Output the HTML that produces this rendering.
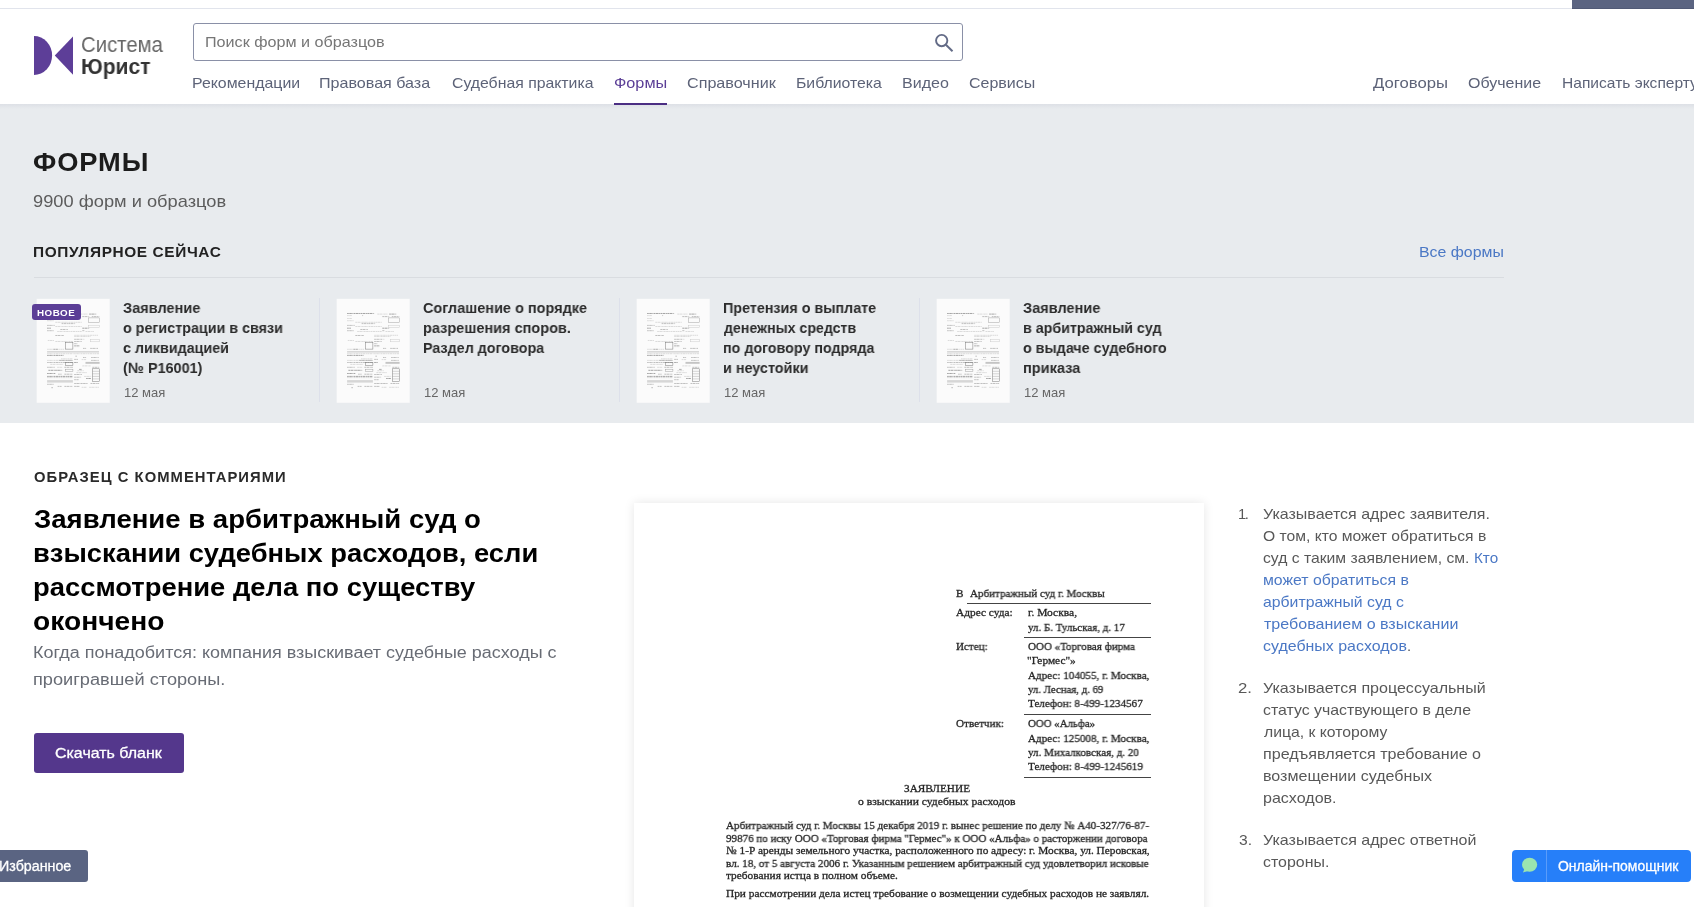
<!DOCTYPE html>
<html lang="ru">
<head>
<meta charset="utf-8">
<title>Формы — Система Юрист</title>
<style>
*{box-sizing:border-box;margin:0;padding:0}
html,body{width:1694px;height:907px;overflow:hidden;background:#fff}
body{position:relative;font-family:"Liberation Sans",sans-serif}
.page{position:absolute;left:0;top:0;width:1694px;height:907px;overflow:hidden;contain:paint}
.abs,.t,.th{position:absolute}
.t{white-space:nowrap;display:block;font-weight:400;font-style:normal;will-change:transform;transform-origin:0 0}
.r{font-family:"Liberation Serif",serif}
.th{background:#fbfbfb}
a{color:inherit;text-decoration:none}
ol,li{list-style:none}
</style>
</head>
<body>
<div class="page">
<!-- top strip -->
<div class="abs" style="left:0;top:0;width:1694px;height:8px;background:#fff"></div>
<div class="abs" style="left:0;top:8px;width:1694px;height:1px;background:#e1e4ec"></div>
<div class="abs" style="left:1572px;top:0;width:122px;height:9px;background:#5b6481;border-bottom:1px solid #515a76"></div>

<!-- gray section -->
<div class="abs" style="left:0;top:104px;width:1694px;height:319px;background:#e8ebee"></div>
<div class="abs" style="left:0;top:104px;width:1694px;height:5px;background:linear-gradient(#dde0e6,#e8ebee)"></div>

<!-- logo -->
<svg class="abs" style="left:34px;top:36px" width="40" height="40" viewBox="0 0 40 40">
<path d="M0 0A18.1 19.5 0 0 1 0 39Z" fill="#5d3e98"/>
<path d="M39 .6V38.7L20.8 19.5Z" fill="#5d3e98"/>
</svg>

<!-- search -->
<div class="abs" style="left:193px;top:23px;width:770px;height:38px;border:1px solid #8a90a7;border-radius:3px;background:#fff"></div>
<svg class="abs" style="left:932px;top:31px" width="24" height="24" viewBox="0 0 24 24" fill="none" stroke="#636b86" stroke-width="1.9">
<circle cx="9.7" cy="9.55" r="5.65"/><path d="M13.9 13.8L20.5 20.3" stroke-width="2"/>
</svg>

<!-- nav underline -->
<div class="abs" style="left:614px;top:103px;width:53px;height:2px;background:#4b2e83"></div>

<!-- divider in gray -->
<div class="abs" style="left:34px;top:277px;width:1470px;height:1px;background:#d9dce0"></div>

<!-- cards -->
<svg class="th" style="left:36px;top:298px;transform:translate(.7px,.8px)" width="73" height="104" viewBox="0 0 73 104" stroke-width=".6" stroke-dasharray="1.7 .45 2.6 .5 1.1 .4"><rect x="10.4" y="52.4" width="51.9" height="1.3" fill="#cfcfcf"/><rect x="48.8" y="63.1" width="14.1" height="1.9" fill="#c4c4c4"/><rect x="10.4" y="81.3" width="25.8" height="2.5" fill="#d6d6d6"/><path d="M10.4 14.7H37.5" stroke="#6a6a6a"/><path d="M40.6 15.3H50.7" stroke="#c6c6c6"/><path d="M52.5 15.3H59.5" stroke="#6a6a6a"/><path d="M10.4 16.8H15.5" stroke="#c6c6c6"/><path d="M25.5 16.8H26.4" stroke="#999"/><path d="M45.6 17.8H52.5" stroke="#999"/><path d="M55.1 17.8H62.6" stroke="#999"/><path d="M10.4 19.7H15.5" stroke="#c6c6c6"/><path d="M10.4 21.9H17.3" stroke="#c6c6c6"/><path d="M18.6 23.5H45.0" stroke="#c6c6c6"/><path d="M24.9 24.8H38.5" stroke="#999"/><path d="M10.4 26.6H18.0" stroke="#999"/><path d="M18.6 27.7H45.0" stroke="#c6c6c6"/><path d="M10.4 29.4H14.2" stroke="#6a6a6a"/><path d="M23.6 30.7H31.2" stroke="#999"/><path d="M45.6 29.4H52.5" stroke="#6a6a6a"/><path d="M10.4 31.9H17.3" stroke="#999"/><path d="M20.5 32.7H45.0" stroke="#c6c6c6"/><path d="M45.6 31.9H48.1" stroke="#999"/><path d="M48.8 32.7H57.6" stroke="#c6c6c6"/><path d="M18.6 36.7H27.4" stroke="#999"/><path d="M37.5 36.5H61.3" stroke="#c6c6c6"/><path d="M37.5 37.7H53.8" stroke="#c6c6c6"/><path d="M11.1 41.7H17.3" stroke="#c6c6c6"/><path d="M18.6 42.7H36.2" stroke="#c6c6c6"/><path d="M37.5 40.5H45.6" stroke="#999"/><path d="M46.9 40.5H47.5" stroke="#999"/><path d="M37.5 42.7H45.0" stroke="#999"/><path d="M37.5 44.9H40.6" stroke="#999"/><path d="M37.5 46.8H43.1" stroke="#999"/><path d="M37.5 47.8H43.1" stroke="#c6c6c6"/><path d="M10.4 50.5H27.4" stroke="#c6c6c6"/><path d="M16.7 50.5H21.1" stroke="#999"/><path d="M46.3 49.6H49.4" stroke="#999"/><path d="M53.5 49.6H61.3" stroke="#999"/><path d="M10.4 54.9H62.3" stroke="#c6c6c6"/><path d="M10.4 56.6H26.8" stroke="#6a6a6a"/><path d="M38.7 57.4H40.2" stroke="#999"/><path d="M46.3 58.7H49.4" stroke="#999"/><path d="M54.4 58.7H62.0" stroke="#999"/><path d="M24.3 60.0H35.6" stroke="#c6c6c6"/><path d="M10.4 61.6H36.2" stroke="#c6c6c6"/><path d="M22.6 61.6H36.2" stroke="#999"/><path d="M37.5 60.6H41.2" stroke="#999"/><path d="M45.0 60.8H49.4" stroke="#c6c6c6"/><path d="M54.4 61.6H62.0" stroke="#999"/><path d="M10.4 63.7H36.2" stroke="#999"/><path d="M37.5 63.7H41.0" stroke="#6a6a6a"/><path d="M13.6 65.6H26.4" stroke="#c6c6c6"/><path d="M45.6 67.1H53.8" stroke="#c6c6c6"/><path d="M10.4 68.5H18.0" stroke="#999"/><path d="M20.5 68.5H25.9" stroke="#c6c6c6"/><path d="M27.7 68.5H36.2" stroke="#999"/><path d="M55.7 68.5H62.6" stroke="#999"/><path d="M11.7 71.5H25.5" stroke="#6a6a6a"/><path d="M42.5 70.6H45.2" stroke="#6a6a6a"/><path d="M40.6 71.9H46.9" stroke="#c6c6c6"/><path d="M39.7 73.8H50.0" stroke="#c6c6c6"/><path d="M10.4 74.7H18.6" stroke="#6a6a6a"/><path d="M21.4 75.4H24.9" stroke="#999"/><path d="M27.7 75.4H35.6" stroke="#999"/><path d="M37.5 75.7H45.2" stroke="#999"/><path d="M10.4 77.6H36.2" stroke="#6a6a6a"/><path d="M47.5 77.6H54.4" stroke="#c6c6c6"/><path d="M10.4 78.8H36.2" stroke="#c6c6c6"/><path d="M37.5 78.4H44.4" stroke="#999"/><path d="M49.4 79.7H54.4" stroke="#6a6a6a"/><path d="M37.5 80.9H41.9" stroke="#999"/><path d="M37.5 84.7H51.3" stroke="#999"/><path d="M53.8 84.7H62.8" stroke="#999"/><path d="M10.4 85.5H17.3" stroke="#999"/><path d="M20.9 87.6H24.9" stroke="#999"/><path d="M27.7 87.6H35.6" stroke="#999"/><path d="M37.5 87.6H43.1" stroke="#999"/><path d="M45.0 88.5H50.0" stroke="#c6c6c6"/><path d="M52.5 88.5H62.3" stroke="#c6c6c6"/><path d="M14.6 88.9H16.3" stroke="#999"/><rect x="51.9" y="19.1" width="10.9" height="4.8" fill="none" stroke="#999" stroke-width=".45" stroke-dasharray="none"/><rect x="51.9" y="26.4" width="10.9" height="2.5" fill="none" stroke="#c6c6c6" stroke-width=".45" stroke-dasharray="none"/><rect x="53.8" y="40.5" width="9.0" height="2.5" fill="none" stroke="#c6c6c6" stroke-width=".45" stroke-dasharray="none"/><rect x="29.0" y="43.6" width="7.2" height="6.7" fill="none" stroke="#6a6a6a" stroke-width=".45" stroke-dasharray="none"/><rect x="29.0" y="63.7" width="7.2" height="3.1" fill="none" stroke="#6a6a6a" stroke-width=".45" stroke-dasharray="none"/><rect x="29.0" y="70.4" width="7.2" height="2.5" fill="none" stroke="#999" stroke-width=".45" stroke-dasharray="none"/><rect x="55.7" y="70.0" width="6.9" height="12.6" fill="none" stroke="#6a6a6a" stroke-width=".45" stroke-dasharray="none"/><path d="M55.7 72.5H62.6" stroke="#999" stroke-width=".4" stroke-dasharray="none"/><path d="M55.7 75.0H62.6" stroke="#999" stroke-width=".4" stroke-dasharray="none"/><path d="M55.7 77.6H62.6" stroke="#999" stroke-width=".4" stroke-dasharray="none"/><path d="M55.7 80.1H62.6" stroke="#999" stroke-width=".4" stroke-dasharray="none"/></svg>
<svg class="th" style="left:336px;top:298px;transform:translate(.7px,.8px)" width="73" height="104" viewBox="0 0 73 104" stroke-width=".6" stroke-dasharray="1.7 .45 2.6 .5 1.1 .4"><rect x="10.4" y="52.4" width="51.9" height="1.3" fill="#cfcfcf"/><rect x="48.8" y="63.1" width="14.1" height="1.9" fill="#c4c4c4"/><rect x="10.4" y="81.3" width="25.8" height="2.5" fill="#d6d6d6"/><path d="M10.4 14.7H37.5" stroke="#6a6a6a"/><path d="M40.6 15.3H50.7" stroke="#c6c6c6"/><path d="M52.5 15.3H59.5" stroke="#6a6a6a"/><path d="M10.4 16.8H15.5" stroke="#c6c6c6"/><path d="M25.5 16.8H26.4" stroke="#999"/><path d="M45.6 17.8H52.5" stroke="#999"/><path d="M55.1 17.8H62.6" stroke="#999"/><path d="M10.4 19.7H15.5" stroke="#c6c6c6"/><path d="M10.4 21.9H17.3" stroke="#c6c6c6"/><path d="M18.6 23.5H45.0" stroke="#c6c6c6"/><path d="M24.9 24.8H38.5" stroke="#999"/><path d="M10.4 26.6H18.0" stroke="#999"/><path d="M18.6 27.7H45.0" stroke="#c6c6c6"/><path d="M10.4 29.4H14.2" stroke="#6a6a6a"/><path d="M23.6 30.7H31.2" stroke="#999"/><path d="M45.6 29.4H52.5" stroke="#6a6a6a"/><path d="M10.4 31.9H17.3" stroke="#999"/><path d="M20.5 32.7H45.0" stroke="#c6c6c6"/><path d="M45.6 31.9H48.1" stroke="#999"/><path d="M48.8 32.7H57.6" stroke="#c6c6c6"/><path d="M18.6 36.7H27.4" stroke="#999"/><path d="M37.5 36.5H61.3" stroke="#c6c6c6"/><path d="M37.5 37.7H53.8" stroke="#c6c6c6"/><path d="M11.1 41.7H17.3" stroke="#c6c6c6"/><path d="M18.6 42.7H36.2" stroke="#c6c6c6"/><path d="M37.5 40.5H45.6" stroke="#999"/><path d="M46.9 40.5H47.5" stroke="#999"/><path d="M37.5 42.7H45.0" stroke="#999"/><path d="M37.5 44.9H40.6" stroke="#999"/><path d="M37.5 46.8H43.1" stroke="#999"/><path d="M37.5 47.8H43.1" stroke="#c6c6c6"/><path d="M10.4 50.5H27.4" stroke="#c6c6c6"/><path d="M16.7 50.5H21.1" stroke="#999"/><path d="M46.3 49.6H49.4" stroke="#999"/><path d="M53.5 49.6H61.3" stroke="#999"/><path d="M10.4 54.9H62.3" stroke="#c6c6c6"/><path d="M10.4 56.6H26.8" stroke="#6a6a6a"/><path d="M38.7 57.4H40.2" stroke="#999"/><path d="M46.3 58.7H49.4" stroke="#999"/><path d="M54.4 58.7H62.0" stroke="#999"/><path d="M24.3 60.0H35.6" stroke="#c6c6c6"/><path d="M10.4 61.6H36.2" stroke="#c6c6c6"/><path d="M22.6 61.6H36.2" stroke="#999"/><path d="M37.5 60.6H41.2" stroke="#999"/><path d="M45.0 60.8H49.4" stroke="#c6c6c6"/><path d="M54.4 61.6H62.0" stroke="#999"/><path d="M10.4 63.7H36.2" stroke="#999"/><path d="M37.5 63.7H41.0" stroke="#6a6a6a"/><path d="M13.6 65.6H26.4" stroke="#c6c6c6"/><path d="M45.6 67.1H53.8" stroke="#c6c6c6"/><path d="M10.4 68.5H18.0" stroke="#999"/><path d="M20.5 68.5H25.9" stroke="#c6c6c6"/><path d="M27.7 68.5H36.2" stroke="#999"/><path d="M55.7 68.5H62.6" stroke="#999"/><path d="M11.7 71.5H25.5" stroke="#6a6a6a"/><path d="M42.5 70.6H45.2" stroke="#6a6a6a"/><path d="M40.6 71.9H46.9" stroke="#c6c6c6"/><path d="M39.7 73.8H50.0" stroke="#c6c6c6"/><path d="M10.4 74.7H18.6" stroke="#6a6a6a"/><path d="M21.4 75.4H24.9" stroke="#999"/><path d="M27.7 75.4H35.6" stroke="#999"/><path d="M37.5 75.7H45.2" stroke="#999"/><path d="M10.4 77.6H36.2" stroke="#6a6a6a"/><path d="M47.5 77.6H54.4" stroke="#c6c6c6"/><path d="M10.4 78.8H36.2" stroke="#c6c6c6"/><path d="M37.5 78.4H44.4" stroke="#999"/><path d="M49.4 79.7H54.4" stroke="#6a6a6a"/><path d="M37.5 80.9H41.9" stroke="#999"/><path d="M37.5 84.7H51.3" stroke="#999"/><path d="M53.8 84.7H62.8" stroke="#999"/><path d="M10.4 85.5H17.3" stroke="#999"/><path d="M20.9 87.6H24.9" stroke="#999"/><path d="M27.7 87.6H35.6" stroke="#999"/><path d="M37.5 87.6H43.1" stroke="#999"/><path d="M45.0 88.5H50.0" stroke="#c6c6c6"/><path d="M52.5 88.5H62.3" stroke="#c6c6c6"/><path d="M14.6 88.9H16.3" stroke="#999"/><rect x="51.9" y="19.1" width="10.9" height="4.8" fill="none" stroke="#999" stroke-width=".45" stroke-dasharray="none"/><rect x="51.9" y="26.4" width="10.9" height="2.5" fill="none" stroke="#c6c6c6" stroke-width=".45" stroke-dasharray="none"/><rect x="53.8" y="40.5" width="9.0" height="2.5" fill="none" stroke="#c6c6c6" stroke-width=".45" stroke-dasharray="none"/><rect x="29.0" y="43.6" width="7.2" height="6.7" fill="none" stroke="#6a6a6a" stroke-width=".45" stroke-dasharray="none"/><rect x="29.0" y="63.7" width="7.2" height="3.1" fill="none" stroke="#6a6a6a" stroke-width=".45" stroke-dasharray="none"/><rect x="29.0" y="70.4" width="7.2" height="2.5" fill="none" stroke="#999" stroke-width=".45" stroke-dasharray="none"/><rect x="55.7" y="70.0" width="6.9" height="12.6" fill="none" stroke="#6a6a6a" stroke-width=".45" stroke-dasharray="none"/><path d="M55.7 72.5H62.6" stroke="#999" stroke-width=".4" stroke-dasharray="none"/><path d="M55.7 75.0H62.6" stroke="#999" stroke-width=".4" stroke-dasharray="none"/><path d="M55.7 77.6H62.6" stroke="#999" stroke-width=".4" stroke-dasharray="none"/><path d="M55.7 80.1H62.6" stroke="#999" stroke-width=".4" stroke-dasharray="none"/></svg>
<svg class="th" style="left:636px;top:298px;transform:translate(.7px,.8px)" width="73" height="104" viewBox="0 0 73 104" stroke-width=".6" stroke-dasharray="1.7 .45 2.6 .5 1.1 .4"><rect x="10.4" y="52.4" width="51.9" height="1.3" fill="#cfcfcf"/><rect x="48.8" y="63.1" width="14.1" height="1.9" fill="#c4c4c4"/><rect x="10.4" y="81.3" width="25.8" height="2.5" fill="#d6d6d6"/><path d="M10.4 14.7H37.5" stroke="#6a6a6a"/><path d="M40.6 15.3H50.7" stroke="#c6c6c6"/><path d="M52.5 15.3H59.5" stroke="#6a6a6a"/><path d="M10.4 16.8H15.5" stroke="#c6c6c6"/><path d="M25.5 16.8H26.4" stroke="#999"/><path d="M45.6 17.8H52.5" stroke="#999"/><path d="M55.1 17.8H62.6" stroke="#999"/><path d="M10.4 19.7H15.5" stroke="#c6c6c6"/><path d="M10.4 21.9H17.3" stroke="#c6c6c6"/><path d="M18.6 23.5H45.0" stroke="#c6c6c6"/><path d="M24.9 24.8H38.5" stroke="#999"/><path d="M10.4 26.6H18.0" stroke="#999"/><path d="M18.6 27.7H45.0" stroke="#c6c6c6"/><path d="M10.4 29.4H14.2" stroke="#6a6a6a"/><path d="M23.6 30.7H31.2" stroke="#999"/><path d="M45.6 29.4H52.5" stroke="#6a6a6a"/><path d="M10.4 31.9H17.3" stroke="#999"/><path d="M20.5 32.7H45.0" stroke="#c6c6c6"/><path d="M45.6 31.9H48.1" stroke="#999"/><path d="M48.8 32.7H57.6" stroke="#c6c6c6"/><path d="M18.6 36.7H27.4" stroke="#999"/><path d="M37.5 36.5H61.3" stroke="#c6c6c6"/><path d="M37.5 37.7H53.8" stroke="#c6c6c6"/><path d="M11.1 41.7H17.3" stroke="#c6c6c6"/><path d="M18.6 42.7H36.2" stroke="#c6c6c6"/><path d="M37.5 40.5H45.6" stroke="#999"/><path d="M46.9 40.5H47.5" stroke="#999"/><path d="M37.5 42.7H45.0" stroke="#999"/><path d="M37.5 44.9H40.6" stroke="#999"/><path d="M37.5 46.8H43.1" stroke="#999"/><path d="M37.5 47.8H43.1" stroke="#c6c6c6"/><path d="M10.4 50.5H27.4" stroke="#c6c6c6"/><path d="M16.7 50.5H21.1" stroke="#999"/><path d="M46.3 49.6H49.4" stroke="#999"/><path d="M53.5 49.6H61.3" stroke="#999"/><path d="M10.4 54.9H62.3" stroke="#c6c6c6"/><path d="M10.4 56.6H26.8" stroke="#6a6a6a"/><path d="M38.7 57.4H40.2" stroke="#999"/><path d="M46.3 58.7H49.4" stroke="#999"/><path d="M54.4 58.7H62.0" stroke="#999"/><path d="M24.3 60.0H35.6" stroke="#c6c6c6"/><path d="M10.4 61.6H36.2" stroke="#c6c6c6"/><path d="M22.6 61.6H36.2" stroke="#999"/><path d="M37.5 60.6H41.2" stroke="#999"/><path d="M45.0 60.8H49.4" stroke="#c6c6c6"/><path d="M54.4 61.6H62.0" stroke="#999"/><path d="M10.4 63.7H36.2" stroke="#999"/><path d="M37.5 63.7H41.0" stroke="#6a6a6a"/><path d="M13.6 65.6H26.4" stroke="#c6c6c6"/><path d="M45.6 67.1H53.8" stroke="#c6c6c6"/><path d="M10.4 68.5H18.0" stroke="#999"/><path d="M20.5 68.5H25.9" stroke="#c6c6c6"/><path d="M27.7 68.5H36.2" stroke="#999"/><path d="M55.7 68.5H62.6" stroke="#999"/><path d="M11.7 71.5H25.5" stroke="#6a6a6a"/><path d="M42.5 70.6H45.2" stroke="#6a6a6a"/><path d="M40.6 71.9H46.9" stroke="#c6c6c6"/><path d="M39.7 73.8H50.0" stroke="#c6c6c6"/><path d="M10.4 74.7H18.6" stroke="#6a6a6a"/><path d="M21.4 75.4H24.9" stroke="#999"/><path d="M27.7 75.4H35.6" stroke="#999"/><path d="M37.5 75.7H45.2" stroke="#999"/><path d="M10.4 77.6H36.2" stroke="#6a6a6a"/><path d="M47.5 77.6H54.4" stroke="#c6c6c6"/><path d="M10.4 78.8H36.2" stroke="#c6c6c6"/><path d="M37.5 78.4H44.4" stroke="#999"/><path d="M49.4 79.7H54.4" stroke="#6a6a6a"/><path d="M37.5 80.9H41.9" stroke="#999"/><path d="M37.5 84.7H51.3" stroke="#999"/><path d="M53.8 84.7H62.8" stroke="#999"/><path d="M10.4 85.5H17.3" stroke="#999"/><path d="M20.9 87.6H24.9" stroke="#999"/><path d="M27.7 87.6H35.6" stroke="#999"/><path d="M37.5 87.6H43.1" stroke="#999"/><path d="M45.0 88.5H50.0" stroke="#c6c6c6"/><path d="M52.5 88.5H62.3" stroke="#c6c6c6"/><path d="M14.6 88.9H16.3" stroke="#999"/><rect x="51.9" y="19.1" width="10.9" height="4.8" fill="none" stroke="#999" stroke-width=".45" stroke-dasharray="none"/><rect x="51.9" y="26.4" width="10.9" height="2.5" fill="none" stroke="#c6c6c6" stroke-width=".45" stroke-dasharray="none"/><rect x="53.8" y="40.5" width="9.0" height="2.5" fill="none" stroke="#c6c6c6" stroke-width=".45" stroke-dasharray="none"/><rect x="29.0" y="43.6" width="7.2" height="6.7" fill="none" stroke="#6a6a6a" stroke-width=".45" stroke-dasharray="none"/><rect x="29.0" y="63.7" width="7.2" height="3.1" fill="none" stroke="#6a6a6a" stroke-width=".45" stroke-dasharray="none"/><rect x="29.0" y="70.4" width="7.2" height="2.5" fill="none" stroke="#999" stroke-width=".45" stroke-dasharray="none"/><rect x="55.7" y="70.0" width="6.9" height="12.6" fill="none" stroke="#6a6a6a" stroke-width=".45" stroke-dasharray="none"/><path d="M55.7 72.5H62.6" stroke="#999" stroke-width=".4" stroke-dasharray="none"/><path d="M55.7 75.0H62.6" stroke="#999" stroke-width=".4" stroke-dasharray="none"/><path d="M55.7 77.6H62.6" stroke="#999" stroke-width=".4" stroke-dasharray="none"/><path d="M55.7 80.1H62.6" stroke="#999" stroke-width=".4" stroke-dasharray="none"/></svg>
<svg class="th" style="left:936px;top:298px;transform:translate(.7px,.8px)" width="73" height="104" viewBox="0 0 73 104" stroke-width=".6" stroke-dasharray="1.7 .45 2.6 .5 1.1 .4"><rect x="10.4" y="52.4" width="51.9" height="1.3" fill="#cfcfcf"/><rect x="48.8" y="63.1" width="14.1" height="1.9" fill="#c4c4c4"/><rect x="10.4" y="81.3" width="25.8" height="2.5" fill="#d6d6d6"/><path d="M10.4 14.7H37.5" stroke="#6a6a6a"/><path d="M40.6 15.3H50.7" stroke="#c6c6c6"/><path d="M52.5 15.3H59.5" stroke="#6a6a6a"/><path d="M10.4 16.8H15.5" stroke="#c6c6c6"/><path d="M25.5 16.8H26.4" stroke="#999"/><path d="M45.6 17.8H52.5" stroke="#999"/><path d="M55.1 17.8H62.6" stroke="#999"/><path d="M10.4 19.7H15.5" stroke="#c6c6c6"/><path d="M10.4 21.9H17.3" stroke="#c6c6c6"/><path d="M18.6 23.5H45.0" stroke="#c6c6c6"/><path d="M24.9 24.8H38.5" stroke="#999"/><path d="M10.4 26.6H18.0" stroke="#999"/><path d="M18.6 27.7H45.0" stroke="#c6c6c6"/><path d="M10.4 29.4H14.2" stroke="#6a6a6a"/><path d="M23.6 30.7H31.2" stroke="#999"/><path d="M45.6 29.4H52.5" stroke="#6a6a6a"/><path d="M10.4 31.9H17.3" stroke="#999"/><path d="M20.5 32.7H45.0" stroke="#c6c6c6"/><path d="M45.6 31.9H48.1" stroke="#999"/><path d="M48.8 32.7H57.6" stroke="#c6c6c6"/><path d="M18.6 36.7H27.4" stroke="#999"/><path d="M37.5 36.5H61.3" stroke="#c6c6c6"/><path d="M37.5 37.7H53.8" stroke="#c6c6c6"/><path d="M11.1 41.7H17.3" stroke="#c6c6c6"/><path d="M18.6 42.7H36.2" stroke="#c6c6c6"/><path d="M37.5 40.5H45.6" stroke="#999"/><path d="M46.9 40.5H47.5" stroke="#999"/><path d="M37.5 42.7H45.0" stroke="#999"/><path d="M37.5 44.9H40.6" stroke="#999"/><path d="M37.5 46.8H43.1" stroke="#999"/><path d="M37.5 47.8H43.1" stroke="#c6c6c6"/><path d="M10.4 50.5H27.4" stroke="#c6c6c6"/><path d="M16.7 50.5H21.1" stroke="#999"/><path d="M46.3 49.6H49.4" stroke="#999"/><path d="M53.5 49.6H61.3" stroke="#999"/><path d="M10.4 54.9H62.3" stroke="#c6c6c6"/><path d="M10.4 56.6H26.8" stroke="#6a6a6a"/><path d="M38.7 57.4H40.2" stroke="#999"/><path d="M46.3 58.7H49.4" stroke="#999"/><path d="M54.4 58.7H62.0" stroke="#999"/><path d="M24.3 60.0H35.6" stroke="#c6c6c6"/><path d="M10.4 61.6H36.2" stroke="#c6c6c6"/><path d="M22.6 61.6H36.2" stroke="#999"/><path d="M37.5 60.6H41.2" stroke="#999"/><path d="M45.0 60.8H49.4" stroke="#c6c6c6"/><path d="M54.4 61.6H62.0" stroke="#999"/><path d="M10.4 63.7H36.2" stroke="#999"/><path d="M37.5 63.7H41.0" stroke="#6a6a6a"/><path d="M13.6 65.6H26.4" stroke="#c6c6c6"/><path d="M45.6 67.1H53.8" stroke="#c6c6c6"/><path d="M10.4 68.5H18.0" stroke="#999"/><path d="M20.5 68.5H25.9" stroke="#c6c6c6"/><path d="M27.7 68.5H36.2" stroke="#999"/><path d="M55.7 68.5H62.6" stroke="#999"/><path d="M11.7 71.5H25.5" stroke="#6a6a6a"/><path d="M42.5 70.6H45.2" stroke="#6a6a6a"/><path d="M40.6 71.9H46.9" stroke="#c6c6c6"/><path d="M39.7 73.8H50.0" stroke="#c6c6c6"/><path d="M10.4 74.7H18.6" stroke="#6a6a6a"/><path d="M21.4 75.4H24.9" stroke="#999"/><path d="M27.7 75.4H35.6" stroke="#999"/><path d="M37.5 75.7H45.2" stroke="#999"/><path d="M10.4 77.6H36.2" stroke="#6a6a6a"/><path d="M47.5 77.6H54.4" stroke="#c6c6c6"/><path d="M10.4 78.8H36.2" stroke="#c6c6c6"/><path d="M37.5 78.4H44.4" stroke="#999"/><path d="M49.4 79.7H54.4" stroke="#6a6a6a"/><path d="M37.5 80.9H41.9" stroke="#999"/><path d="M37.5 84.7H51.3" stroke="#999"/><path d="M53.8 84.7H62.8" stroke="#999"/><path d="M10.4 85.5H17.3" stroke="#999"/><path d="M20.9 87.6H24.9" stroke="#999"/><path d="M27.7 87.6H35.6" stroke="#999"/><path d="M37.5 87.6H43.1" stroke="#999"/><path d="M45.0 88.5H50.0" stroke="#c6c6c6"/><path d="M52.5 88.5H62.3" stroke="#c6c6c6"/><path d="M14.6 88.9H16.3" stroke="#999"/><rect x="51.9" y="19.1" width="10.9" height="4.8" fill="none" stroke="#999" stroke-width=".45" stroke-dasharray="none"/><rect x="51.9" y="26.4" width="10.9" height="2.5" fill="none" stroke="#c6c6c6" stroke-width=".45" stroke-dasharray="none"/><rect x="53.8" y="40.5" width="9.0" height="2.5" fill="none" stroke="#c6c6c6" stroke-width=".45" stroke-dasharray="none"/><rect x="29.0" y="43.6" width="7.2" height="6.7" fill="none" stroke="#6a6a6a" stroke-width=".45" stroke-dasharray="none"/><rect x="29.0" y="63.7" width="7.2" height="3.1" fill="none" stroke="#6a6a6a" stroke-width=".45" stroke-dasharray="none"/><rect x="29.0" y="70.4" width="7.2" height="2.5" fill="none" stroke="#999" stroke-width=".45" stroke-dasharray="none"/><rect x="55.7" y="70.0" width="6.9" height="12.6" fill="none" stroke="#6a6a6a" stroke-width=".45" stroke-dasharray="none"/><path d="M55.7 72.5H62.6" stroke="#999" stroke-width=".4" stroke-dasharray="none"/><path d="M55.7 75.0H62.6" stroke="#999" stroke-width=".4" stroke-dasharray="none"/><path d="M55.7 77.6H62.6" stroke="#999" stroke-width=".4" stroke-dasharray="none"/><path d="M55.7 80.1H62.6" stroke="#999" stroke-width=".4" stroke-dasharray="none"/></svg>

<div class="abs" style="left:319px;top:298px;width:1px;height:104px;background:#dde0ea"></div>
<div class="abs" style="left:619px;top:298px;width:1px;height:104px;background:#dde0ea"></div>
<div class="abs" style="left:919px;top:298px;width:1px;height:104px;background:#dde0ea"></div>
<div class="abs" style="left:32px;top:304px;width:49px;height:16px;border-radius:3px;background:#5b3e96"></div>

<!-- download button -->
<div class="abs" style="left:34px;top:733px;width:150px;height:40px;border-radius:3px;background:#54378c"></div>

<!-- favourites tab -->
<div class="abs" style="left:0;top:850px;width:88px;height:32px;border-radius:0 3px 3px 0;background:#5a6482"></div>

<!-- document -->
<div class="abs" style="left:634px;top:503px;width:570px;height:430px;background:#fff;box-shadow:0 0 10px rgba(0,0,0,.10)"></div>
<div class="abs" style="left:967px;top:603px;width:184px;height:1px;background:#444"></div>
<div class="abs" style="left:1024px;top:637px;width:127px;height:1px;background:#444"></div>
<div class="abs" style="left:1024px;top:714px;width:127px;height:1px;background:#444"></div>
<div class="abs" style="left:1024px;top:777px;width:127px;height:1px;background:#444"></div>

<!-- online helper -->
<div class="abs" style="left:1512px;top:850px;width:179px;height:32px;border-radius:4px;background:#267ff9"></div>
<div class="abs" style="left:1546px;top:850px;width:1px;height:32px;background:#5a9cfa"></div>
<svg class="abs" style="left:1520px;top:856px" width="20" height="20" viewBox="0 0 20 20">
<ellipse cx="9.6" cy="8.8" rx="7.6" ry="7" fill="#9be4b0"/><path d="M4.6 12.5L3 16.6L8.5 14.8Z" fill="#9be4b0"/>
</svg>

<header>
<a>
<span class="t" style="left:80.85px;top:31.00px;font-size:21.4px;line-height:28px;color:#666;transform:scaleX(0.9501);">Система</span>
<span class="t" style="left:80.53px;top:53.00px;font-size:21.5px;line-height:28px;color:#333;font-weight:700;transform:scaleX(0.9783);">Юрист</span>
</a>
<label class="t" style="left:204.52px;top:32.70px;font-size:14.6px;line-height:19px;color:#767676;transform:scaleX(1.1065);">Поиск форм и образцов</label>
<nav>
<a class="t" style="left:191.86px;top:73.70px;font-size:14.8px;line-height:19px;color:#5d6378;transform:scaleX(1.0731);">Рекомендации</a>
<a class="t" style="left:319.44px;top:73.70px;font-size:14.8px;line-height:19px;color:#5d6378;transform:scaleX(1.0871);">Правовая база</a>
<a class="t" style="left:451.60px;top:73.70px;font-size:14.8px;line-height:19px;color:#5d6378;transform:scaleX(1.0679);">Судебная практика</a>
<a class="t" style="left:614.18px;top:73.70px;font-size:14.8px;line-height:19px;color:#5b3e96;transform:scaleX(1.0973);">Формы</a>
<a class="t" style="left:687.08px;top:73.70px;font-size:14.8px;line-height:19px;color:#5d6378;transform:scaleX(1.0907);">Справочник</a>
<a class="t" style="left:796.37px;top:73.70px;font-size:14.8px;line-height:19px;color:#5d6378;transform:scaleX(1.0675);">Библиотека</a>
<a class="t" style="left:902.45px;top:73.70px;font-size:14.8px;line-height:19px;color:#5d6378;transform:scaleX(1.0836);">Видео</a>
<a class="t" style="left:969.29px;top:73.70px;font-size:14.8px;line-height:19px;color:#5d6378;transform:scaleX(1.0807);">Сервисы</a>
<a class="t" style="left:1373.40px;top:73.70px;font-size:14.8px;line-height:19px;color:#5d6378;transform:scaleX(1.1267);">Договоры</a>
<a class="t" style="left:1468.19px;top:73.70px;font-size:14.8px;line-height:19px;color:#5d6378;transform:scaleX(1.0792);">Обучение</a>
<a class="t" style="left:1561.78px;top:73.70px;font-size:14.8px;line-height:19px;color:#5d6378;transform:scaleX(1.0521);">Написать эксперту</a>
</nav>
</header>
<section>
<h1 class="t" style="left:33.27px;top:144.80px;font-size:26.5px;line-height:34px;color:#1c1c1c;font-weight:700;letter-spacing:.9px;transform:scaleX(1.0292);">ФОРМЫ</h1>
<p class="t" style="left:33.45px;top:191.10px;font-size:16.2px;line-height:21px;color:#5c5c5c;transform:scaleX(1.1281);">9900 форм и образцов</p>
<h2 class="t" style="left:33.27px;top:241.80px;font-size:15px;line-height:20px;color:#222;font-weight:700;letter-spacing:.6px;transform:scaleX(1.0259);">ПОПУЛЯРНОЕ СЕЙЧАС</h2>
<a class="t" style="left:1418.81px;top:242.30px;font-size:15.4px;line-height:20px;color:#4b78c5;transform:scaleX(1.0325);">Все формы</a>
<article>
<span class="t" style="left:37.13px;top:306.80px;font-size:9.6px;line-height:12px;color:#fff;font-weight:700;letter-spacing:.5px;transform:scaleX(1.0210);">НОВОЕ</span>
<a class="t" style="left:123.22px;top:298.20px;font-size:15px;line-height:20px;color:#2b2b2b;font-weight:700;transform:scaleX(0.9689);">Заявление</a>
<a class="t" style="left:123.22px;top:318.20px;font-size:15px;line-height:20px;color:#2b2b2b;font-weight:700;transform:scaleX(0.9548);">о регистрации в связи</a>
<a class="t" style="left:123.22px;top:338.20px;font-size:15px;line-height:20px;color:#2b2b2b;font-weight:700;transform:scaleX(0.9543);">с ликвидацией</a>
<a class="t" style="left:122.98px;top:358.20px;font-size:15px;line-height:20px;color:#2b2b2b;font-weight:700;transform:scaleX(0.9612);">(№ Р16001)</a>
<time class="t" style="left:123.67px;top:384.90px;font-size:12.6px;line-height:16px;color:#666;transform:scaleX(1.0327);">12 мая</time>
</article>
<article>
<a class="t" style="left:423.22px;top:298.20px;font-size:15px;line-height:20px;color:#2b2b2b;font-weight:700;transform:scaleX(0.9645);">Соглашение о порядке</a>
<a class="t" style="left:422.73px;top:318.20px;font-size:15px;line-height:20px;color:#2b2b2b;font-weight:700;transform:scaleX(0.9669);">разрешения споров.</a>
<a class="t" style="left:422.75px;top:338.20px;font-size:15px;line-height:20px;color:#2b2b2b;font-weight:700;transform:scaleX(0.9548);">Раздел договора</a>
<time class="t" style="left:423.67px;top:384.90px;font-size:12.6px;line-height:16px;color:#666;transform:scaleX(1.0327);">12 мая</time>
</article>
<article>
<a class="t" style="left:723.05px;top:298.20px;font-size:15px;line-height:20px;color:#2b2b2b;font-weight:700;transform:scaleX(0.9547);">Претензия о выплате</a>
<a class="t" style="left:724.00px;top:318.20px;font-size:15px;line-height:20px;color:#2b2b2b;font-weight:700;transform:scaleX(0.9427);">денежных средств</a>
<a class="t" style="left:723.05px;top:338.20px;font-size:15px;line-height:20px;color:#2b2b2b;font-weight:700;transform:scaleX(0.9517);">по договору подряда</a>
<a class="t" style="left:723.04px;top:358.20px;font-size:15px;line-height:20px;color:#2b2b2b;font-weight:700;transform:scaleX(0.9582);">и неустойки</a>
<time class="t" style="left:723.97px;top:384.90px;font-size:12.6px;line-height:16px;color:#666;transform:scaleX(1.0327);">12 мая</time>
</article>
<article>
<a class="t" style="left:1023.22px;top:298.20px;font-size:15px;line-height:20px;color:#2b2b2b;font-weight:700;transform:scaleX(0.9689);">Заявление</a>
<a class="t" style="left:1022.75px;top:318.20px;font-size:15px;line-height:20px;color:#2b2b2b;font-weight:700;transform:scaleX(0.9485);">в арбитражный суд</a>
<a class="t" style="left:1023.22px;top:338.20px;font-size:15px;line-height:20px;color:#2b2b2b;font-weight:700;transform:scaleX(0.9536);">о выдаче судебного</a>
<a class="t" style="left:1022.73px;top:358.20px;font-size:15px;line-height:20px;color:#2b2b2b;font-weight:700;transform:scaleX(0.9700);">приказа</a>
<time class="t" style="left:1023.67px;top:384.90px;font-size:12.6px;line-height:16px;color:#666;transform:scaleX(1.0327);">12 мая</time>
</article>
</section>
<main>
<section>
<h3 class="t" style="left:33.58px;top:468.30px;font-size:14.2px;line-height:18px;color:#2a2a2a;font-weight:700;letter-spacing:1px;transform:scaleX(1.0421);">ОБРАЗЕЦ С КОММЕНТАРИЯМИ</h3>
<h2>
<span class="t" style="left:33.52px;top:501.80px;font-size:26.6px;line-height:35px;color:#000;font-weight:700;transform:scaleX(1.0361);">Заявление в арбитражный суд о</span>
<span class="t" style="left:32.50px;top:535.80px;font-size:26.6px;line-height:35px;color:#000;font-weight:700;transform:scaleX(1.0287);">взыскании судебных расходов, если</span>
<span class="t" style="left:32.50px;top:569.80px;font-size:26.6px;line-height:35px;color:#000;font-weight:700;transform:scaleX(1.0297);">рассмотрение дела по существу</span>
<span class="t" style="left:33.24px;top:603.80px;font-size:26.6px;line-height:35px;color:#000;font-weight:700;transform:scaleX(1.0590);">окончено</span>
</h2>
<p>
<span class="t" style="left:32.86px;top:642.80px;font-size:15.6px;line-height:20px;color:#686c75;transform:scaleX(1.1525);">Когда понадобится: компания взыскивает судебные расходы с</span>
<span class="t" style="left:33.13px;top:669.70px;font-size:15.6px;line-height:20px;color:#686c75;transform:scaleX(1.1662);">проигравшей стороны.</span>
</p>
<a class="t" style="left:54.73px;top:743.20px;font-size:15.5px;line-height:20px;color:#fff;transform:scaleX(1.0297);-webkit-text-stroke:.3px #fff;">Скачать бланк</a>
</section>
<article>
<span class="t r" style="left:955.95px;top:585.70px;font-size:11.2px;line-height:15px;color:#1e1e1e;-webkit-text-stroke:.3px #2a2a2a;">В</span>
<span class="t r" style="left:970.10px;top:585.70px;font-size:11.2px;line-height:15px;color:#1e1e1e;transform:scaleX(0.9853);-webkit-text-stroke:.3px #2a2a2a;">Арбитражный суд г. Москвы</span>
<span class="t r" style="left:956.20px;top:605.10px;font-size:11.2px;line-height:15px;color:#1e1e1e;transform:scaleX(1.0145);-webkit-text-stroke:.3px #2a2a2a;">Адрес суда:</span>
<span class="t r" style="left:1027.84px;top:605.10px;font-size:11.2px;line-height:15px;color:#1e1e1e;transform:scaleX(1.0267);-webkit-text-stroke:.3px #2a2a2a;">г. Москва,</span>
<span class="t r" style="left:1027.85px;top:619.90px;font-size:11.2px;line-height:15px;color:#1e1e1e;transform:scaleX(0.9802);-webkit-text-stroke:.3px #2a2a2a;">ул. Б. Тульская, д. 17</span>
<span class="t r" style="left:955.95px;top:638.80px;font-size:11.2px;line-height:15px;color:#1e1e1e;transform:scaleX(0.9854);-webkit-text-stroke:.3px #2a2a2a;">Истец:</span>
<span class="t r" style="left:1027.61px;top:638.80px;font-size:11.2px;line-height:15px;color:#1e1e1e;transform:scaleX(0.9856);-webkit-text-stroke:.3px #2a2a2a;">ООО «Торговая фирма</span>
<span class="t r" style="left:1027.34px;top:653.00px;font-size:11.2px;line-height:15px;color:#1e1e1e;transform:scaleX(1.0160);-webkit-text-stroke:.3px #2a2a2a;">"Гермес"»</span>
<span class="t r" style="left:1028.10px;top:667.50px;font-size:11.2px;line-height:15px;color:#1e1e1e;transform:scaleX(0.9922);-webkit-text-stroke:.3px #2a2a2a;">Адрес: 104055, г. Москва,</span>
<span class="t r" style="left:1027.86px;top:682.10px;font-size:11.2px;line-height:15px;color:#1e1e1e;transform:scaleX(0.9639);-webkit-text-stroke:.3px #2a2a2a;">ул. Лесная, д. 69</span>
<span class="t r" style="left:1027.85px;top:695.90px;font-size:11.2px;line-height:15px;color:#1e1e1e;transform:scaleX(0.9909);-webkit-text-stroke:.3px #2a2a2a;">Телефон: 8-499-1234567</span>
<span class="t r" style="left:955.70px;top:716.00px;font-size:11.2px;line-height:15px;color:#1e1e1e;transform:scaleX(0.9947);-webkit-text-stroke:.3px #2a2a2a;">Ответчик:</span>
<span class="t r" style="left:1027.62px;top:716.00px;font-size:11.2px;line-height:15px;color:#1e1e1e;transform:scaleX(0.9691);-webkit-text-stroke:.3px #2a2a2a;">ООО «Альфа»</span>
<span class="t r" style="left:1028.10px;top:730.60px;font-size:11.2px;line-height:15px;color:#1e1e1e;transform:scaleX(0.9922);-webkit-text-stroke:.3px #2a2a2a;">Адрес: 125008, г. Москва,</span>
<span class="t r" style="left:1027.85px;top:744.70px;font-size:11.2px;line-height:15px;color:#1e1e1e;transform:scaleX(0.9861);-webkit-text-stroke:.3px #2a2a2a;">ул. Михалковская, д. 20</span>
<span class="t r" style="left:1027.85px;top:759.00px;font-size:11.2px;line-height:15px;color:#1e1e1e;transform:scaleX(0.9930);-webkit-text-stroke:.3px #2a2a2a;">Телефон: 8-499-1245619</span>
<span class="t r" style="left:904.10px;top:780.90px;font-size:11.2px;line-height:15px;color:#1e1e1e;transform:scaleX(1.0062);-webkit-text-stroke:.3px #2a2a2a;">ЗАЯВЛЕНИЕ</span>
<span class="t r" style="left:858.48px;top:793.80px;font-size:11.2px;line-height:15px;color:#1e1e1e;transform:scaleX(1.0364);-webkit-text-stroke:.3px #2a2a2a;">о взыскании судебных расходов</span>
<p>
<span class="t r" style="left:726.30px;top:818.20px;font-size:11.2px;line-height:15px;color:#1e1e1e;transform:scaleX(0.9870);-webkit-text-stroke:.3px #2a2a2a;">Арбитражный суд г. Москвы 15 декабря 2019 г. вынес решение по делу № А40-327/76-87-</span>
<span class="t r" style="left:726.05px;top:830.75px;font-size:11.2px;line-height:15px;color:#1e1e1e;transform:scaleX(0.9854);-webkit-text-stroke:.3px #2a2a2a;">99876 по иску ООО «Торговая фирма "Гермес"» к ООО «Альфа» о расторжении договора</span>
<span class="t r" style="left:726.05px;top:843.30px;font-size:11.2px;line-height:15px;color:#1e1e1e;transform:scaleX(1.0094);-webkit-text-stroke:.3px #2a2a2a;">№ 1-Р аренды земельного участка, расположенного по адресу: г. Москва, ул. Перовская,</span>
<span class="t r" style="left:726.05px;top:855.85px;font-size:11.2px;line-height:15px;color:#1e1e1e;transform:scaleX(0.9912);-webkit-text-stroke:.3px #2a2a2a;">вл. 18, от 5 августа 2006 г. Указанным решением арбитражный суд удовлетворил исковые</span>
<span class="t r" style="left:726.05px;top:868.40px;font-size:11.2px;line-height:15px;color:#1e1e1e;transform:scaleX(1.0148);-webkit-text-stroke:.3px #2a2a2a;">требования истца в полном объеме.</span>
</p>
<p>
<span class="t r" style="left:726.05px;top:886.00px;font-size:11.2px;line-height:15px;color:#1e1e1e;transform:scaleX(1.0132);-webkit-text-stroke:.3px #2a2a2a;">При рассмотрении дела истец требование о возмещении судебных расходов не заявлял.</span>
</p>
</article>
<ol>
<li>
<span class="t" style="left:1238.15px;top:504.50px;font-size:14.8px;line-height:19px;color:#585858;letter-spacing:-1.4px;transform:scaleX(0.9529);">1.</span>
<span class="t" style="left:1263.36px;top:504.50px;font-size:14.8px;line-height:19px;color:#585858;transform:scaleX(1.0813);">Указывается адрес заявителя.</span>
<span class="t" style="left:1263.11px;top:526.50px;font-size:14.8px;line-height:19px;color:#585858;transform:scaleX(1.0582);">О том, кто может обратиться в</span>
<span class="t" style="left:1263.37px;top:548.50px;font-size:14.8px;line-height:19px;color:#585858;transform:scaleX(1.0610);">суд с таким заявлением, см.</span>
<a class="t" style="left:1473.52px;top:548.50px;font-size:14.8px;line-height:19px;color:#4b78c5;transform:scaleX(1.0279);">Кто</a>
<a class="t" style="left:1262.83px;top:570.50px;font-size:14.8px;line-height:19px;color:#4b78c5;transform:scaleX(1.0679);">может обратиться в</a>
<a class="t" style="left:1263.10px;top:592.50px;font-size:14.8px;line-height:19px;color:#4b78c5;transform:scaleX(1.0669);">арбитражный суд с</a>
<a class="t" style="left:1263.63px;top:614.50px;font-size:14.8px;line-height:19px;color:#4b78c5;transform:scaleX(1.0843);">требованием о взыскании</a>
<a class="t" style="left:1263.36px;top:636.50px;font-size:14.8px;line-height:19px;color:#4b78c5;transform:scaleX(1.0775);">судебных расходов</a>
<span class="t" style="left:1406.75px;top:636.50px;font-size:14.8px;line-height:19px;color:#585858;">.</span>
</li>
<li>
<span class="t" style="left:1238.25px;top:678.50px;font-size:14.8px;line-height:19px;color:#585858;transform:scaleX(1.1317);">2.</span>
<span class="t" style="left:1263.36px;top:678.50px;font-size:14.8px;line-height:19px;color:#585858;transform:scaleX(1.0838);">Указывается процессуальный</span>
<span class="t" style="left:1263.36px;top:700.50px;font-size:14.8px;line-height:19px;color:#585858;transform:scaleX(1.0719);">статус участвующего в деле</span>
<span class="t" style="left:1263.90px;top:722.50px;font-size:14.8px;line-height:19px;color:#585858;transform:scaleX(1.0635);">лица, к которому</span>
<span class="t" style="left:1262.81px;top:744.50px;font-size:14.8px;line-height:19px;color:#585858;transform:scaleX(1.0878);">предъявляется требование о</span>
<span class="t" style="left:1262.81px;top:766.50px;font-size:14.8px;line-height:19px;color:#585858;transform:scaleX(1.0854);">возмещении судебных</span>
<span class="t" style="left:1262.82px;top:788.50px;font-size:14.8px;line-height:19px;color:#585858;transform:scaleX(1.0840);">расходов.</span>
</li>
<li>
<span class="t" style="left:1238.57px;top:830.50px;font-size:14.8px;line-height:19px;color:#585858;transform:scaleX(1.0571);">3.</span>
<span class="t" style="left:1263.36px;top:830.50px;font-size:14.8px;line-height:19px;color:#585858;transform:scaleX(1.0825);">Указывается адрес ответной</span>
<span class="t" style="left:1263.36px;top:852.50px;font-size:14.8px;line-height:19px;color:#585858;transform:scaleX(1.0762);">стороны.</span>
</li>
</ol>
</main>
<a class="t" style="left:-0.97px;top:857.40px;font-size:14px;line-height:18px;color:#fff;transform:scaleX(1.0188);-webkit-text-stroke:.3px #fff;">Избранное</a>
<a class="t" style="left:1558.24px;top:858.00px;font-size:13.8px;line-height:18px;color:#fff;transform:scaleX(1.0106);-webkit-text-stroke:.3px #fff;">Онлайн-помощник</a>
</div>
</body>
</html>
